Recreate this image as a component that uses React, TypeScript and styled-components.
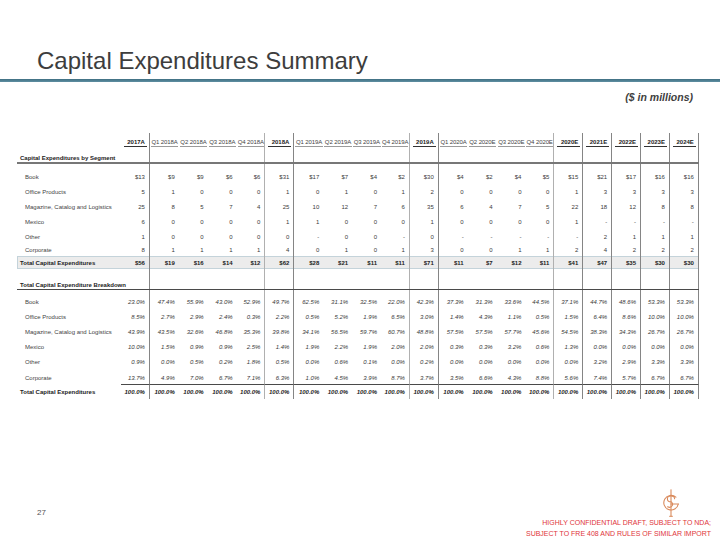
import React from 'react';
import styled, { createGlobalStyle, css } from 'styled-components';

const GlobalStyle = createGlobalStyle`
  html, body { margin: 0; padding: 0; background: #ffffff; }
  body { font-family: "Liberation Sans", Arial, sans-serif; }
`;

type Edge = 'dark' | 'light' | 'none';

const COLS = '104px repeat(20, 28.9px)';

const Page = styled.div`
  width: 720px;
  height: 540px;
  display: flex;
  flex-direction: column;
  overflow: hidden;
  background: #ffffff;
  color: #333333;
`;

const Title = styled.h1`
  margin: 0;
  padding: 47px 0 0 37px;
  font-size: 24px;
  line-height: 28px;
  font-weight: normal;
  color: #3d3d3d;
`;

const Rule = styled.div`
  margin-top: 4px;
  height: 3px;
  background: linear-gradient(#3f6f82, #5f8fa2);
`;

const Units = styled.div`
  margin-top: 9px;
  padding-right: 27px;
  text-align: right;
  font-size: 10.5px;
  line-height: 13px;
  font-weight: bold;
  font-style: italic;
  color: #404040;
`;

const Table = styled.div`
  margin: 29px 0 0 17px;
  width: 682px;
  display: flex;
  flex-direction: column;
  font-size: 6px;
`;

const Row = styled.div<{ $h: number; $line?: string; $total?: boolean }>`
  display: grid;
  grid-template-columns: ${COLS};
  height: ${(p) => p.$h}px;
  box-sizing: border-box;
  ${(p) => p.$line && css`border-bottom: ${p.$line};`}
  ${(p) =>
    p.$total &&
    css`
      background: #ececec;
      box-shadow: inset 0 0 0 1px #c4d3da;
    `}
`;

const edgeColor = (e: Edge) =>
  e === 'dark' ? '1px solid #858585' : e === 'light' ? '1px solid #b0b0b0' : 'none';

const Cell = styled.div<{
  $edge: Edge;
  $italic?: boolean;
  $bold?: boolean;
  $under?: boolean;
  $valign?: 'center' | 'end';
  $padTop?: number;
}>`
  box-sizing: border-box;
  height: 100%;
  display: flex;
  justify-content: flex-end;
  align-items: ${(p) => (p.$valign === 'end' ? 'flex-end' : 'center')};
  padding-right: 4px;
  padding-top: ${(p) => p.$padTop ?? 0}px;
  border-right: ${(p) => edgeColor(p.$edge)};
  ${(p) => p.$under && css`border-bottom: 1px solid #4a4a4a;`}
  font-style: ${(p) => (p.$italic ? 'italic' : 'normal')};
  font-weight: ${(p) => (p.$bold ? 'bold' : 'normal')};
  color: ${(p) => (p.$bold ? '#222222' : '#3a3a3a')};
  line-height: 8px;
  white-space: nowrap;
`;

const HeadCell = styled.div<{ $edge: Edge }>`
  box-sizing: border-box;
  height: 100%;
  display: flex;
  align-items: flex-end;
  padding-bottom: 2px;
  border-right: ${(p) => edgeColor(p.$edge)};
`;

const HeadText = styled.span<{ $annual: boolean }>`
  display: block;
  flex: 1;
  margin: ${(p) => (p.$annual ? '0 2px 0 3px' : '0 0.5px 0 1px')};
  padding-right: ${(p) => (p.$annual ? '2px' : '0')};
  text-align: ${(p) => (p.$annual ? 'right' : 'center')};
  font-weight: ${(p) => (p.$annual ? 'bold' : 'normal')};
  color: ${(p) => (p.$annual ? '#222222' : '#444444')};
  border-bottom: ${(p) => (p.$annual ? '1px solid #333333' : '1px solid #9a9a9a')};
  line-height: 8px;
  white-space: nowrap;
  letter-spacing: ${(p) => (p.$annual ? '0' : '-0.1px')};
`;

const Label = styled.div<{ $indent: number; $bold?: boolean; $valign?: 'center' | 'end'; $padTop?: number }>`
  box-sizing: border-box;
  height: 100%;
  display: flex;
  align-items: ${(p) => (p.$valign === 'end' ? 'flex-end' : 'center')};
  padding-left: ${(p) => p.$indent}px;
  padding-top: ${(p) => p.$padTop ?? 0}px;
  font-weight: ${(p) => (p.$bold ? 'bold' : 'normal')};
  color: ${(p) => (p.$bold ? '#222222' : '#444444')};
  line-height: 8px;
  white-space: nowrap;
  overflow: visible;
`;

const Footer = styled.footer`
  margin-top: auto;
  display: flex;
  justify-content: space-between;
  align-items: flex-end;
  padding: 0 9px 1px 37px;
`;

const PageNum = styled.div`
  margin-bottom: 21px;
  font-size: 8px;
  line-height: 10px;
  color: #555555;
`;

const Brand = styled.div`
  display: flex;
  flex-direction: column;
  align-items: flex-end;
`;

const LogoWrap = styled.div`
  margin-right: 31px;
  width: 18px;
  height: 28px;
`;

const Notice = styled.div`
  text-align: right;
  font-size: 7px;
  line-height: 11px;
  color: #e0353a;
`;

const headers = [
  '2017A',
  'Q1 2018A',
  'Q2 2018A',
  'Q3 2018A',
  'Q4 2018A',
  '2018A',
  'Q1 2019A',
  'Q2 2019A',
  'Q3 2019A',
  'Q4 2019A',
  '2019A',
  'Q1 2020A',
  'Q2 2020E',
  'Q3 2020E',
  'Q4 2020E',
  '2020E',
  '2021E',
  '2022E',
  '2023E',
  '2024E',
];

const annual = new Set([0, 5, 10, 15, 16, 17, 18, 19]);
const edgeOf = (i: number): Edge => (annual.has(i) ? 'dark' : annual.has(i + 1) ? 'light' : 'none');

const segments: [string, string[]][] = [
  ['Book', ['$13', '$9', '$9', '$6', '$6', '$31', '$17', '$7', '$4', '$2', '$30', '$4', '$2', '$4', '$5', '$15', '$21', '$17', '$16', '$16']],
  ['Office Products', ['5', '1', '0', '0', '0', '1', '0', '1', '0', '1', '2', '0', '0', '0', '0', '1', '3', '3', '3', '3']],
  ['Magazine, Catalog and Logistics', ['25', '8', '5', '7', '4', '25', '10', '12', '7', '6', '35', '6', '4', '7', '5', '22', '18', '12', '8', '8']],
  ['Mexico', ['6', '0', '0', '0', '0', '1', '1', '0', '0', '0', '1', '0', '0', '0', '0', '1', '-', '-', '-', '-']],
  ['Other', ['1', '0', '0', '0', '0', '0', '-', '0', '0', '-', '0', '-', '-', '-', '-', '-', '2', '1', '1', '1']],
  ['Corporate', ['8', '1', '1', '1', '1', '4', '0', '1', '0', '1', '3', '0', '0', '1', '1', '2', '4', '2', '2', '2']],
];

const segTotal = ['$56', '$19', '$16', '$14', '$12', '$62', '$28', '$21', '$11', '$11', '$71', '$11', '$7', '$12', '$11', '$41', '$47', '$35', '$30', '$30'];

const breakdown: [string, string[]][] = [
  ['Book', ['23.0%', '47.4%', '55.9%', '43.0%', '52.9%', '49.7%', '62.5%', '31.1%', '32.5%', '22.0%', '42.3%', '37.3%', '31.3%', '33.6%', '44.5%', '37.1%', '44.7%', '48.6%', '53.3%', '53.3%']],
  ['Office Products', ['8.5%', '2.7%', '2.9%', '2.4%', '0.3%', '2.2%', '0.5%', '5.2%', '1.9%', '6.5%', '3.0%', '1.4%', '4.3%', '1.1%', '0.5%', '1.5%', '6.4%', '8.6%', '10.0%', '10.0%']],
  ['Magazine, Catalog and Logistics', ['43.9%', '43.5%', '32.6%', '46.8%', '35.3%', '39.8%', '34.1%', '56.5%', '59.7%', '60.7%', '48.8%', '57.5%', '57.5%', '57.7%', '45.6%', '54.5%', '38.3%', '34.3%', '26.7%', '26.7%']],
  ['Mexico', ['10.0%', '1.5%', '0.9%', '0.9%', '2.5%', '1.4%', '1.9%', '2.2%', '1.9%', '2.0%', '2.0%', '0.3%', '0.3%', '3.2%', '0.6%', '1.3%', '0.0%', '0.0%', '0.0%', '0.0%']],
  ['Other', ['0.9%', '0.0%', '0.5%', '0.2%', '1.8%', '0.5%', '0.0%', '0.6%', '0.1%', '0.0%', '0.2%', '0.0%', '0.0%', '0.0%', '0.0%', '0.0%', '3.2%', '2.9%', '3.3%', '3.3%']],
  ['Corporate', ['13.7%', '4.9%', '7.0%', '6.7%', '7.1%', '6.3%', '1.0%', '4.5%', '3.9%', '8.7%', '3.7%', '3.5%', '6.6%', '4.3%', '8.8%', '5.6%', '7.4%', '5.7%', '6.7%', '6.7%']],
];

const hundred = headers.map(() => '100.0%');
const blanks = headers.map(() => '');

const Logo = () => (
  <svg width="18" height="28" viewBox="0 0 18 28" fill="none" stroke="#d98a5c" strokeWidth="1.1" strokeLinecap="round">
    <path d="M9 0.8 V27.2" />
    <path d="M13.9 8.2 A7.3 7.3 0 1 0 16.3 15" />
    <path d="M9 15 H16.3" />
    <path d="M12.6 9.8 A3.6 2.9 0 1 0 9 12.8 A3.3 2.9 0 1 1 5.6 17.8" />
    <path d="M7.6 27.2 H10.4" />
  </svg>
);

type ValueRowProps = {
  label: string;
  values: string[];
  h: number;
  indent?: number;
  italic?: boolean;
  bold?: boolean;
  under?: boolean;
  total?: boolean;
  padTop?: number;
  line?: string;
  valign?: 'center' | 'end';
};

const ValueRow = ({ label, values, h, indent = 8, italic, bold, under, total, padTop, line, valign }: ValueRowProps) => (
  <Row $h={h} $total={total} $line={line}>
    <Label $indent={indent} $bold={bold} $padTop={padTop} $valign={valign}>
      {label}
    </Label>
    {values.map((v, i) => (
      <Cell key={i} $edge={edgeOf(i)} $italic={italic} $bold={bold} $under={under} $padTop={padTop} $valign={valign}>
        {v}
      </Cell>
    ))}
  </Row>
);

export default function App() {
  return (
    <Page>
      <GlobalStyle />
      <Title>Capital Expenditures Summary</Title>
      <Rule />
      <Units>($ in millions)</Units>
      <Table>
        <Row $h={16}>
          <div />
          {headers.map((h, i) => (
            <HeadCell key={h} $edge={edgeOf(i)}>
              <HeadText $annual={annual.has(i)}>{h}</HeadText>
            </HeadCell>
          ))}
        </Row>
        <ValueRow label="Capital Expenditures by Segment" values={blanks} h={15} indent={3} bold valign="end" line="2px solid #777777" />
        <ValueRow label="" values={blanks} h={5} />
        {segments.map(([label, values], idx) => (
          <ValueRow key={label} label={label} values={values} h={idx === segments.length - 1 ? 12 : 15} />
        ))}
        <ValueRow label="Total Capital Expenditures" values={segTotal} h={13} indent={3} bold total />
        <ValueRow label="Total Capital Expenditure Breakdown" values={blanks} h={21} indent={3} bold valign="end" line="1px solid #4a4a4a" />
        <ValueRow label="" values={blanks} h={4} />
        {breakdown.map(([label, values], idx) => {
          const last = idx === breakdown.length - 1;
          return (
            <ValueRow key={label} label={label} values={values} h={last ? 16 : 15} italic under={last} padTop={last ? 2 : 0} />
          );
        })}
        <ValueRow label="Total Capital Expenditures" values={hundred} h={14} indent={3} bold italic />
      </Table>
      <Footer>
        <PageNum>27</PageNum>
        <Brand>
          <LogoWrap>
            <Logo />
          </LogoWrap>
          <Notice>
            HIGHLY CONFIDENTIAL DRAFT, SUBJECT TO NDA;
            <br />
            SUBJECT TO FRE 408 AND RULES OF SIMILAR IMPORT
          </Notice>
        </Brand>
      </Footer>
    </Page>
  );
}
